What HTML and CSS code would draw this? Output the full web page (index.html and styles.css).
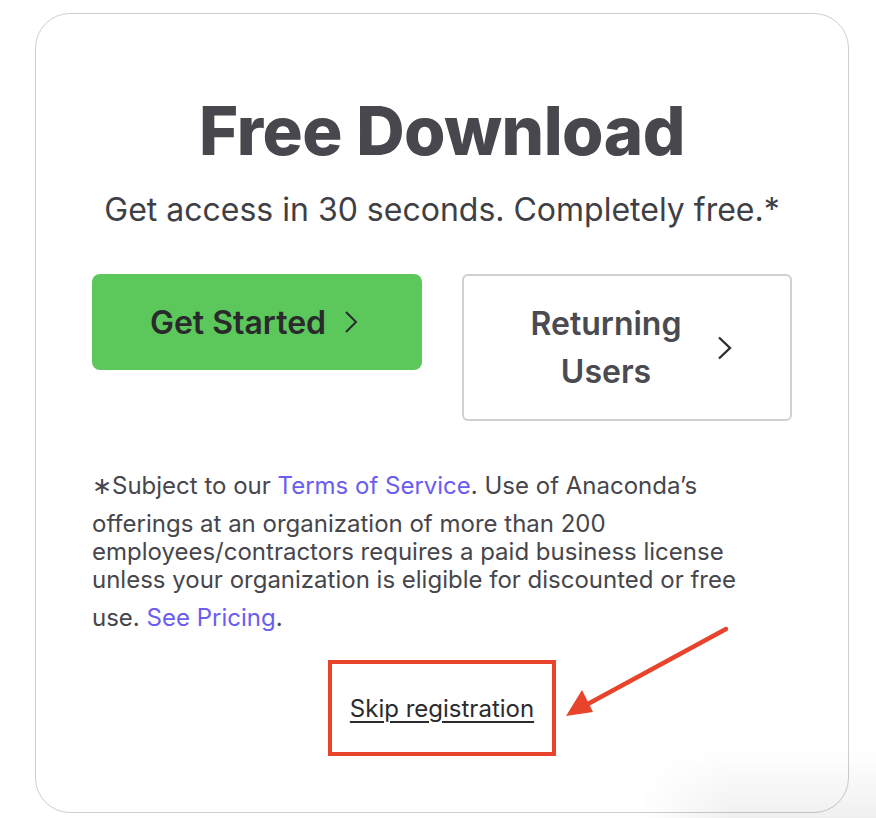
FILE: index.html
```html
<!DOCTYPE html>
<html lang="en">
<head>
<meta charset="utf-8">
<title>Free Download</title>
<link rel="stylesheet" href="styles.css">
</head>
<body>
<div class="page">
  <section class="card">
    <h1 class="title">Free Download</h1>
    <p class="subtitle">Get access in 30 seconds. Completely free.*</p>
    <div class="actions">
      <a class="btn btn-primary" href="#">
        <span class="btn-label">Get Started</span>
        <svg class="chev" width="14" height="24" viewBox="0 0 14 24"><path d="M2 2 L12 12 L2 22" fill="none" stroke="currentColor" stroke-width="2"/></svg>
      </a>
      <a class="btn btn-secondary" href="#">
        <span class="btn-label">Returning<br>Users</span>
        <svg class="chev" width="16" height="24" viewBox="0 0 16 24"><path d="M2 1.5 L13 12 L2 22.5" fill="none" stroke="currentColor" stroke-width="2.4"/></svg>
      </a>
    </div>
    <p class="disclaimer">∗Subject to our <a class="link" href="#">Terms of Service</a>. Use of Anaconda’s offerings at an organization of more than 200 employees/contractors requires a paid business license unless your organization is eligible for discounted or free use. <a class="link" href="#">See Pricing</a>.</p>
    <div class="skip-row">
      <div class="highlight"><a class="skip" href="#">Skip registration</a></div>
    </div>
  </section>
  <svg class="arrow" width="876" height="818" viewBox="0 0 876 818">
    <line x1="726" y1="629" x2="586" y2="705" stroke="#e8432b" stroke-width="4.5" stroke-linecap="round"/>
    <polygon points="566,716 582,690 593,712" fill="#e8432b"/>
  </svg>
  <div class="shade"></div>
</div>
</body>
</html>
```
FILE: styles.css
```css
* { box-sizing: border-box; }
html, body { margin: 0; padding: 0; background: #ffffff; }
body { font-family: "Inter", "Liberation Sans", sans-serif; width: 876px; height: 818px; overflow: hidden; }
.page { position: relative; width: 876px; height: 818px; padding: 13px 27px 0 35px; }
.card {
  width: 814px;
  height: 800px;
  border: 1.5px solid #cdced3;
  border-radius: 35px;
  padding: 0 56px;
  display: flex;
  flex-direction: column;
  align-items: stretch;
}
.title {
  margin: 77px 0 0;
  text-align: center;
  font-family: "Inter", sans-serif;
  font-weight: 800;
  font-size: 67px;
  line-height: 80px;
  letter-spacing: -0.5px;
  color: #47474d;
}
.subtitle {
  margin: 19px 0 0;
  text-align: center;
  font-size: 32px;
  line-height: 40px;
  color: #3f3f46;
}
.actions { display: flex; gap: 40px; margin-top: 44px; align-items: flex-start; }
.btn {
  flex: 0 0 330px;
  display: flex;
  align-items: center;
  justify-content: center;
  gap: 18px;
  text-decoration: none;
  font-size: 32px;
  font-weight: 600;
}
.btn-primary {
  height: 96px;
  background: #5cc85c;
  border-radius: 8px;
  color: #2a2a2c;
  padding-right: 6px;
}
.btn-secondary {
  height: 147px;
  border: 2px solid #cfd0d4;
  border-radius: 6px;
  color: #4a4a50;
  gap: 36px;
  padding-left: 10px;
}
.btn-secondary .btn-label { text-align: center; line-height: 48px; }
.chev { display: block; }
.btn-primary .chev { color: #2a2a2c; }
.btn-secondary .chev { color: #2e2e32; }
.disclaimer {
  margin: 41px 0 0;
  width: 660px;
  font-size: 24px;
  line-height: 28px;
  color: #46464c;
}
.link { color: #6a5df0; text-decoration: none; line-height: 48px; }
.skip-row { display: flex; justify-content: center; margin-top: 18px; }
.highlight {
  width: 228px;
  height: 96px;
  border: 4px solid #e8432b;
  display: flex;
  align-items: center;
  justify-content: center;
}
.skip { color: #2b2b2e; font-size: 24px; text-decoration: underline; text-underline-offset: 4px; text-decoration-thickness: 1.5px; }
.arrow { position: absolute; left: 0; top: 0; pointer-events: none; }
.shade {
  position: absolute;
  left: 640px;
  top: 750px;
  width: 236px;
  height: 68px;
  background: linear-gradient(to bottom, rgba(0,0,0,0) 0%, rgba(0,0,0,0.06) 100%);
  -webkit-mask-image: linear-gradient(to right, transparent 0, #000 90px);
  mask-image: linear-gradient(to right, transparent 0, #000 90px);
  pointer-events: none;
}
```
